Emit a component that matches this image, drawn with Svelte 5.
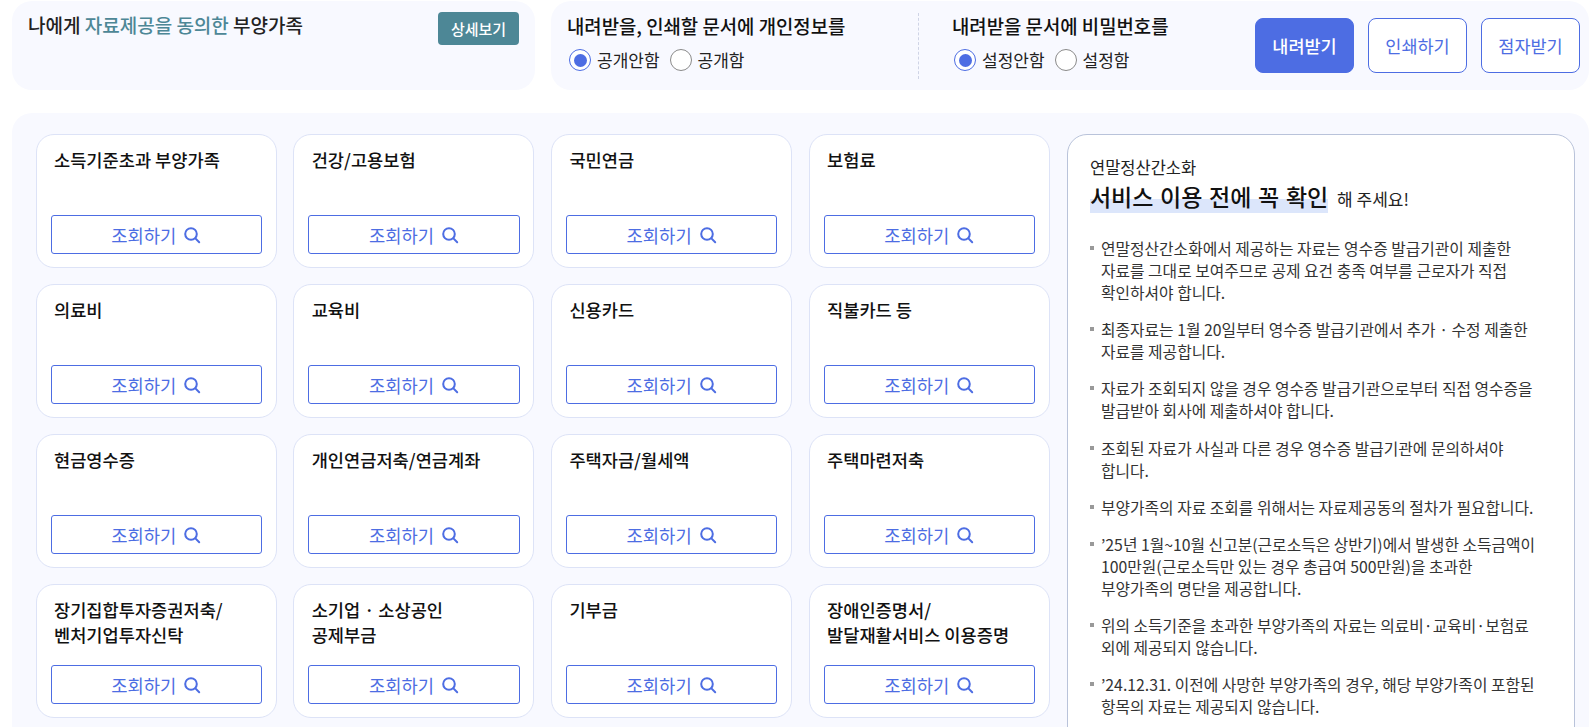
<script>
	const cards = [
		['소득기준초과 부양가족'], ['건강/고용보험'], ['국민연금'], ['보험료'],
		['의료비'], ['교육비'], ['신용카드'], ['직불카드 등'],
		['현금영수증'], ['개인연금저축/연금계좌'], ['주택자금/월세액'], ['주택마련저축'],
		['장기집합투자증권저축/', '벤처기업투자신탁'], ['소기업 · 소상공인', '공제부금'], ['기부금'], ['장애인증명서/', '발달재활서비스 이용증명']
	];

	const notes = [
		['연말정산간소화에서 제공하는 자료는 영수증 발급기관이 제출한', '자료를 그대로 보여주므로 공제 요건 충족 여부를 근로자가 직접', '확인하셔야 합니다.'],
		['최종자료는 1월 20일부터 영수증 발급기관에서 추가 · 수정 제출한', '자료를 제공합니다.'],
		['자료가 조회되지 않을 경우 영수증 발급기관으로부터 직접 영수증을', '발급받아 회사에 제출하셔야 합니다.'],
		['조회된 자료가 사실과 다른 경우 영수증 발급기관에 문의하셔야', '합니다.'],
		['부양가족의 자료 조회를 위해서는 자료제공동의 절차가 필요합니다.'],
		['’25년 1월~10월 신고분(근로소득은 상반기)에서 발생한 소득금액이', '100만원(근로소득만 있는 경우 총급여 500만원)을 초과한', '부양가족의 명단을 제공합니다.'],
		['위의 소득기준을 초과한 부양가족의 자료는 의료비·교육비·보험료', '외에 제공되지 않습니다.'],
		['’24.12.31. 이전에 사망한 부양가족의 경우, 해당 부양가족이 포함된', '항목의 자료는 제공되지 않습니다.']
	];
</script>

<div class="page">
	<div class="top">
		<section class="consent">
			<h2>나에게 <em>자료제공을 동의한</em> 부양가족</h2>
			<button type="button" class="detail">상세보기</button>
		</section>
		<section class="options">
			<div class="opt first">
				<h3>내려받을, 인쇄할 문서에 개인정보를</h3>
				<div class="radios">
					<label><span class="radio on"></span>공개안함</label>
					<label><span class="radio"></span>공개함</label>
				</div>
			</div>
			<div class="opt">
				<h3>내려받을 문서에 비밀번호를</h3>
				<div class="radios">
					<label><span class="radio on"></span>설정안함</label>
					<label><span class="radio"></span>설정함</label>
				</div>
			</div>
			<div class="actions">
				<button type="button" class="act primary">내려받기</button>
				<button type="button" class="act">인쇄하기</button>
				<button type="button" class="act">점자받기</button>
			</div>
		</section>
	</div>

	<main class="body">
		<div class="grid">
			{#each cards as lines}
				<div class="card">
					<div class="card-title">
						{#each lines as line}
							<div>{line}</div>
						{/each}
					</div>
					<button type="button" class="lookup">
						조회하기
						<svg width="18" height="18" viewBox="0 0 18 18" fill="none" stroke="currentColor" stroke-width="2" stroke-linecap="round">
							<circle cx="8" cy="8" r="5.8" />
							<path d="M12.4 12.4 16.2 16.2" />
						</svg>
					</button>
				</div>
			{/each}
		</div>
		<aside class="guide">
			<p class="guide-sub">연말정산간소화</p>
			<p class="guide-head"><strong>서비스 이용 전에 꼭 확인</strong> 해 주세요!</p>
			<ul>
				{#each notes as lines}
					<li>
						{#each lines as line}
							<div>{line}</div>
						{/each}
					</li>
				{/each}
			</ul>
		</aside>
	</main>
</div>

<style>
	:global(body) {
		margin: 0;
		background: #fff;
		overflow: hidden;
	}
	.page {
		height: 727px;
		overflow: hidden;
		box-sizing: border-box;
		padding-left: 12px;
		font-family: 'Noto Sans CJK KR', 'Noto Sans', sans-serif;
		color: #111;
	}
	h2, h3, p, ul {
		margin: 0;
		padding: 0;
	}
	button {
		font-family: inherit;
		cursor: pointer;
	}
	.top {
		display: flex;
		gap: 16px;
		height: 90px;
		padding-top: 1px;
		box-sizing: border-box;
	}
	.consent {
		width: 523px;
		flex: none;
		box-sizing: border-box;
		background: #f8f9ff;
		border-radius: 20px;
		padding: 11px 16px 0;
		display: flex;
		justify-content: space-between;
		align-items: flex-start;
	}
	.consent h2 {
		font-size: 19px;
		font-weight: 500;
		line-height: 26px;
		color: #222;
	}
	.consent em {
		font-style: normal;
		color: #4d8796;
	}
	.detail {
		width: 81px;
		height: 33px;
		background: #4d8796;
		color: #fff;
		border: none;
		border-radius: 4px;
		font-size: 15px;
		font-weight: 500;
		padding: 0;
	}
	.options {
		flex: 1;
		background: #f8f9ff;
		border-radius: 20px;
		display: flex;
		padding: 12px 0 0 16px;
	}
	.opt.first {
		width: 351px;
		height: 66px;
		border-right: 1px dashed #cfd4e6;
		margin-right: 33px;
	}
	.opt h3 {
		font-size: 18.85px;
		font-weight: 500;
		line-height: 26px;
		color: #111;
	}
	.opt:not(.first) {
		width: 303px;
	}
	.radios {
		display: flex;
		gap: 10px;
		margin: 9px 0 0 2px;
	}
	.radios label {
		display: flex;
		align-items: center;
		gap: 6px;
		font-size: 17px;
		line-height: 24px;
		color: #222;
	}
	.radio {
		width: 22px;
		height: 22px;
		box-sizing: border-box;
		border: 1px solid #8a8a8a;
		border-radius: 50%;
		background: #fff;
		position: relative;
	}
	.radio.on {
		border: 1.5px solid #4d6de3;
	}
	.radio.on::after {
		content: '';
		position: absolute;
		inset: 3.5px;
		border-radius: 50%;
		background: #4d6de3;
	}
	.actions {
		display: flex;
		gap: 14px;
		height: 55px;
		margin-top: 5px;
	}
	.act {
		width: 99px;
		height: 55px;
		border: 1px solid #4d6de3;
		border-radius: 8px;
		background: #fff;
		color: #4d6de3;
		font-size: 17.5px;
		font-weight: 400;
		padding: 0;
	}
	.act.primary {
		background: #4d6de3;
		color: #fff;
		font-weight: 500;
	}
	.body {
		margin-top: 23px;
		background: #f8f9ff;
		border-radius: 20px 20px 0 0;
		padding: 21px 14px 0 23.5px;
		display: flex;
		gap: 17.4px;
		height: 620px;
		box-sizing: border-box;
	}
	.grid {
		display: grid;
		grid-template-columns: repeat(4, 241px);
		grid-auto-rows: 134px;
		column-gap: 16.7px;
		row-gap: 16px;
		flex: none;
	}
	.card {
		box-sizing: border-box;
		background: #fff;
		border: 1px solid #dde3f7;
		border-radius: 18px;
		padding: 12px 13.5px 13px 14px;
		display: flex;
		flex-direction: column;
		justify-content: space-between;
	}
	.card-title {
		font-size: 17.6px;
		font-weight: 500;
		line-height: 25px;
		padding-left: 3.5px;
		color: #111;
	}
	.lookup {
		height: 39px;
		flex: none;
		background: #fff;
		border: 1px solid #4d6de3;
		border-radius: 3px;
		color: #4d6de3;
		font-size: 17.7px;
		display: flex;
		align-items: center;
		justify-content: center;
		gap: 7px;
		padding: 0;
	}
	.guide {
		flex: 1;
		box-sizing: border-box;
		height: 640px;
		background: #fff;
		border: 1px solid #b9c3da;
		border-radius: 20px 20px 0 0;
		padding: 21px 22px 0;
	}
	.guide-sub {
		font-size: 16.5px;
		line-height: 22px;
		color: #222;
	}
	.guide-head {
		font-size: 17px;
		line-height: 34px;
		margin-top: 1px;
		color: #222;
		white-space: nowrap;
	}
	.guide-head strong {
		font-size: 23px;
		word-spacing: 1.5px;
		font-weight: 500;
		color: #111;
		background: linear-gradient(transparent 58%, #dce6fb 58%);
		margin-right: 5px;
	}
	ul {
		list-style: none;
		margin-top: 22px;
	}
	li {
		position: relative;
		padding-left: 11px;
		font-size: 15.8px;
		line-height: 22px;
		color: #333;
		margin-bottom: 15.2px;
		white-space: nowrap;
	}
	li::before {
		content: '';
		position: absolute;
		left: 0;
		top: 8px;
		width: 4px;
		height: 4px;
		background: #999;
	}
</style>
